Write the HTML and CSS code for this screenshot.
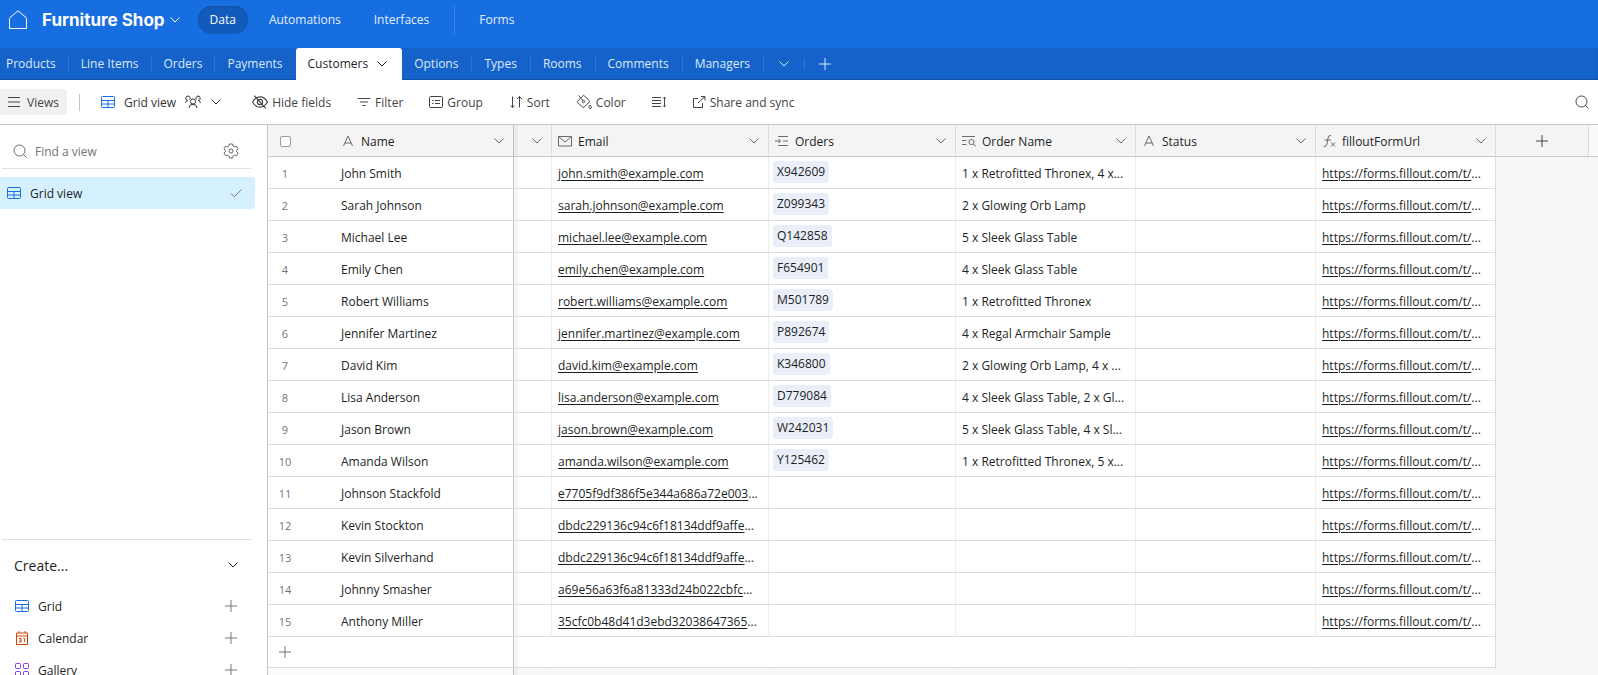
FILE: index.html
```
<!DOCTYPE html>
<html lang="en">
<head>
    <meta charset="UTF-8">
    <meta name="viewport" content="width=device-width, initial-scale=1.0">
    <title>Furniture Shop: Customers</title>
    <link rel="stylesheet" href="styles.css">
</head>
<body>
    <!-- Icons -->
    <svg class="sprite" aria-hidden="true">
        <symbol id="chevron" viewBox="0 0 12 12"><path d="M1.5 3.5 6 8l4.500-4.500"/></symbol>
        <symbol id="plus" viewBox="0 0 12 12"><path d="M6 0v12M0 6h12"/></symbol>
        <symbol id="home" viewBox="0 0 20 20"><path d="M1.500 18.500V8.700Q1.500 8 2 7.500L10 .8 18 7.500q.5.500.5 1.200v9.800z"/></symbol>
        <symbol id="lines" viewBox="0 0 12 12"><path d="M0 1.500h12M0 6h12M0 10.500h12"/></symbol>
        <symbol id="grid" viewBox="0 0 14 14"><path d="M1.500 1.500h11q1 0 1 1v9q0 1-1 1h-11q-1 0-1-1v-9q0-1 1-1zM.5 5.500h13M.5 9h13M7 5.500v7"/></symbol>
        <symbol id="people" viewBox="0 0 16 14"><circle cx="8" cy="6.500" r="2.600"/><path d="M4 13q.5-3.800 4-3.800T12 13M4.800 4.500A2.200 2.200 0 1 0 2.800 5.500Q1 6 .5 8M11.200 4.500a2.200 2.200 0 1 1 2 1Q15 6 15.500 8"/></symbol>
        <symbol id="hidden" viewBox="0 0 14 14"><path d="M.5 7Q3 2.500 7 2.500T13.500 7Q11 11.500 7 11.500T.5 7zM2 1.500l10 11"/><circle cx="7" cy="7" r="2.300"/></symbol>
        <symbol id="filter" viewBox="0 0 14 14"><path d="M.5 3.500h13M3 7h8M5.500 10.500h3"/></symbol>
        <symbol id="group" viewBox="0 0 14 14"><rect x=".5" y="1.500" width="13" height="11" rx="1"/><path d="M3 5.500h1.500M6 5.500h5M3 8.500h1.500M6 8.500h5"/></symbol>
        <symbol id="sort" viewBox="0 0 14 14"><path d="M3.500 1.500v11M1.500 10.500l2 2 2-2M10.500 12.500v-11M8 4l2.500-2.500L13 4"/></symbol>
        <symbol id="paint" viewBox="0 0 16 16"><path d="M1.500 7.200 7 1.800q.7-.6 1.400 0l4.800 4.800q.7.700 0 1.400l-5.200 5.200q-.7.700-1.400 0L1.500 8.400q-.5-.6 0-1.200zM2.500 1.500 7 6.600M14.200 11q-1.500 2-1.300 2.800t1.200.9q1.200 0 1.300-1T14.200 11z"/><circle cx="7.500" cy="7.500" r="1.200"/></symbol>
        <symbol id="height" viewBox="0 0 14 14"><path d="M0 2.500h9M0 5.500h9M0 8.500h9M0 11.500h9M12.500 2v10M11 3.500 12.500 2 14 3.500M11 10.500l1.500 1.500 1.500-1.500"/></symbol>
        <symbol id="share" viewBox="0 0 14 14"><path d="M6 3.500H1.500v9h9V8M6 8l7-6.500M9 1.500h4v4"/></symbol>
        <symbol id="search" viewBox="0 0 14 14"><circle cx="6.500" cy="6.500" r="5.500"/><path d="m10.500 10.500 3 3"/></symbol>
        <symbol id="gear" viewBox="0 0 16 16"><path d="M6.500 1h3l.6 2 1.400.8 2-.5L15 5.900 13.600 7.400v1.200L15 10.100l-1.500 2.600-2-.5-1.400.8-.6 2h-3l-.6-2-1.400-.8-2 .5L1 10.100l1.400-1.500V7.400L1 5.900l1.500-2.600 2 .5L5.900 3z"/><circle cx="8" cy="8" r="2"/></symbol>
        <symbol id="check" viewBox="0 0 12 12"><path d="m1 6.500 3.300 3.300L11.500 2.500"/></symbol>
        <symbol id="calendar" viewBox="0 0 14 14"><path d="M1.500 2h11v11.500h-11zM1.500 5h11M4 0v2M10 0v2M4 7.500h2v3.500H4M4.500 9.200H6M8.500 7.500h1.200V11"/></symbol>
        <symbol id="gallery" viewBox="0 0 14 14"><rect x=".5" y=".5" width="5" height="5" rx="1"/><rect x="8.500" y=".5" width="5" height="5" rx="1"/><rect x=".5" y="8.500" width="5" height="5" rx="1"/><rect x="8.500" y="8.500" width="5" height="5" rx="1"/></symbol>
        <symbol id="text" viewBox="0 0 14 14"><path d="M2.500 12 7 2l4.500 10M4 9h6"/></symbol>
        <symbol id="mail" viewBox="0 0 14 14"><path d="M.5 2.500h13v9.500H.5zM1 3l6 5 6-5"/></symbol>
        <symbol id="link" viewBox="0 0 14 14"><path d="M3 2.500h10M8 7h5M3 11.500h10M0 7h5.500M3.500 5l2 2-2 2"/></symbol>
        <symbol id="lookup" viewBox="0 0 14 14"><path d="M0 2.500h13M0 6.500h4.500M0 10.500h4.500M11.500 10l2 2.500"/><circle cx="9.500" cy="8" r="2.600"/></symbol>
        <symbol id="formula" viewBox="0 0 14 14"><path d="M9 1.500Q6.500.8 6 4L5 10q-.6 3-3.500 2.500M2.500 6H9M9 8.500l4 4M13 8.500l-4 4"/></symbol>
    </svg>

    <header class="topbar">
        <a class="home" href="#" aria-label="Home"><svg class="icon icon-lg"><use href="#home"/></svg></a>
        <button class="base-name">Furniture Shop <svg class="icon icon-sm"><use href="#chevron"/></svg></button>
        <nav class="main-nav">
            <a class="active" href="#">Data</a>
            <a href="#">Automations</a>
            <a href="#">Interfaces</a>
            <a class="forms" href="#">Forms</a>
        </nav>
    </header>

    <nav class="tabs">
        <a href="#">Products</a>
        <a href="#">Line Items</a>
        <a href="#">Orders</a>
        <a class="before-current" href="#">Payments</a>
        <a class="current" href="#">Customers <svg class="icon icon-sm"><use href="#chevron"/></svg></a>
        <a href="#">Options</a>
        <a href="#">Types</a>
        <a href="#">Rooms</a>
        <a href="#">Comments</a>
        <a href="#">Managers</a>
        <button aria-label="All tables"><svg class="icon icon-sm"><use href="#chevron"/></svg></button>
        <button aria-label="Add table"><svg class="icon icon-sm"><use href="#plus"/></svg></button>
    </nav>

    <div class="toolbar">
        <button class="views"><svg class="icon icon-sm"><use href="#lines"/></svg>Views</button>
        <button class="view-name"><svg class="icon blue"><use href="#grid"/></svg>Grid view<svg class="icon icon-md"><use href="#people"/></svg><svg class="icon icon-sm"><use href="#chevron"/></svg></button>
        <div class="tools">
            <button><svg class="icon icon-md"><use href="#hidden"/></svg>Hide fields</button>
            <button><svg class="icon"><use href="#filter"/></svg>Filter</button>
            <button><svg class="icon"><use href="#group"/></svg>Group</button>
            <button><svg class="icon"><use href="#sort"/></svg>Sort</button>
            <button><svg class="icon icon-md"><use href="#paint"/></svg>Color</button>
            <button aria-label="Row height"><svg class="icon"><use href="#height"/></svg></button>
            <button><svg class="icon"><use href="#share"/></svg>Share and sync</button>
        </div>
        <button class="search" aria-label="Search"><svg class="icon"><use href="#search"/></svg></button>
    </div>

    <main class="workspace">
        <aside class="sidebar">
            <div class="find">
                <svg class="icon"><use href="#search"/></svg>
                <input type="text" placeholder="Find a view" aria-label="Find a view">
                <button aria-label="View settings"><svg class="icon icon-md"><use href="#gear"/></svg></button>
            </div>
            <a class="view-item" href="#"><svg class="icon blue"><use href="#grid"/></svg><span>Grid view</span><svg class="icon icon-sm grey"><use href="#check"/></svg></a>
            <div class="create">
                <button class="create-title"><span>Create...</span><svg class="icon icon-sm"><use href="#chevron"/></svg></button>
                <button><svg class="icon blue"><use href="#grid"/></svg><span>Grid</span><svg class="icon icon-sm grey"><use href="#plus"/></svg></button>
                <button><svg class="icon orange"><use href="#calendar"/></svg><span>Calendar</span><svg class="icon icon-sm grey"><use href="#plus"/></svg></button>
                <button><svg class="icon purple"><use href="#gallery"/></svg><span>Gallery</span><svg class="icon icon-sm grey"><use href="#plus"/></svg></button>
            </div>
        </aside>

        <div class="grid">
            <table>
                <colgroup>
                    <col class="col-num"><col class="col-name"><col class="col-slim"><col class="col-email"><col class="col-orders"><col class="col-field"><col class="col-field"><col class="col-field"><col class="col-add"><col>
                </colgroup>
                <thead>
                    <tr>
                        <th class="num"><input type="checkbox" aria-label="Select all rows"></th>
                        <th class="name"><div class="field"><svg class="icon"><use href="#text"/></svg><span>Name</span><svg class="icon icon-sm"><use href="#chevron"/></svg></div></th>
                        <th class="slim"><div class="field"><span></span><svg class="icon icon-sm"><use href="#chevron"/></svg></div></th>
                        <th><div class="field"><svg class="icon"><use href="#mail"/></svg><span>Email</span><svg class="icon icon-sm"><use href="#chevron"/></svg></div></th>
                        <th><div class="field"><svg class="icon"><use href="#link"/></svg><span>Orders</span><svg class="icon icon-sm"><use href="#chevron"/></svg></div></th>
                        <th><div class="field"><svg class="icon"><use href="#lookup"/></svg><span>Order Name</span><svg class="icon icon-sm"><use href="#chevron"/></svg></div></th>
                        <th><div class="field"><svg class="icon"><use href="#text"/></svg><span>Status</span><svg class="icon icon-sm"><use href="#chevron"/></svg></div></th>
                        <th><div class="field"><svg class="icon"><use href="#formula"/></svg><span>filloutFormUrl</span><svg class="icon icon-sm"><use href="#chevron"/></svg></div></th>
                        <th class="add-field"><button aria-label="Add field"><svg class="icon icon-sm"><use href="#plus"/></svg></button></th>
                        <th class="rest"></th>
                    </tr>
                </thead>
                <tbody>
                    <tr><td class="num">1</td><td class="name">John Smith</td><td class="slim"></td><td><a href="#">john.smith@example.com</a></td><td class="order"><span>X942609</span></td><td>1 x Retrofitted Thronex, 4 x...</td><td></td><td><a href="#">https://forms.fillout.com/t/</a>...</td></tr>
                    <tr><td class="num">2</td><td class="name">Sarah Johnson</td><td class="slim"></td><td><a href="#">sarah.johnson@example.com</a></td><td class="order"><span>Z099343</span></td><td>2 x Glowing Orb Lamp</td><td></td><td><a href="#">https://forms.fillout.com/t/</a>...</td></tr>
                    <tr><td class="num">3</td><td class="name">Michael Lee</td><td class="slim"></td><td><a href="#">michael.lee@example.com</a></td><td class="order"><span>Q142858</span></td><td>5 x Sleek Glass Table</td><td></td><td><a href="#">https://forms.fillout.com/t/</a>...</td></tr>
                    <tr><td class="num">4</td><td class="name">Emily Chen</td><td class="slim"></td><td><a href="#">emily.chen@example.com</a></td><td class="order"><span>F654901</span></td><td>4 x Sleek Glass Table</td><td></td><td><a href="#">https://forms.fillout.com/t/</a>...</td></tr>
                    <tr><td class="num">5</td><td class="name">Robert Williams</td><td class="slim"></td><td><a href="#">robert.williams@example.com</a></td><td class="order"><span>M501789</span></td><td>1 x Retrofitted Thronex</td><td></td><td><a href="#">https://forms.fillout.com/t/</a>...</td></tr>
                    <tr><td class="num">6</td><td class="name">Jennifer Martinez</td><td class="slim"></td><td><a href="#">jennifer.martinez@example.com</a></td><td class="order"><span>P892674</span></td><td>4 x Regal Armchair Sample</td><td></td><td><a href="#">https://forms.fillout.com/t/</a>...</td></tr>
                    <tr><td class="num">7</td><td class="name">David Kim</td><td class="slim"></td><td><a href="#">david.kim@example.com</a></td><td class="order"><span>K346800</span></td><td>2 x Glowing Orb Lamp, 4 x ...</td><td></td><td><a href="#">https://forms.fillout.com/t/</a>...</td></tr>
                    <tr><td class="num">8</td><td class="name">Lisa Anderson</td><td class="slim"></td><td><a href="#">lisa.anderson@example.com</a></td><td class="order"><span>D779084</span></td><td>4 x Sleek Glass Table, 2 x Gl...</td><td></td><td><a href="#">https://forms.fillout.com/t/</a>...</td></tr>
                    <tr><td class="num">9</td><td class="name">Jason Brown</td><td class="slim"></td><td><a href="#">jason.brown@example.com</a></td><td class="order"><span>W242031</span></td><td>5 x Sleek Glass Table, 4 x Sl...</td><td></td><td><a href="#">https://forms.fillout.com/t/</a>...</td></tr>
                    <tr><td class="num">10</td><td class="name">Amanda Wilson</td><td class="slim"></td><td><a href="#">amanda.wilson@example.com</a></td><td class="order"><span>Y125462</span></td><td>1 x Retrofitted Thronex, 5 x...</td><td></td><td><a href="#">https://forms.fillout.com/t/</a>...</td></tr>
                    <tr><td class="num">11</td><td class="name">Johnson Stackfold</td><td class="slim"></td><td><a href="#">e7705f9df386f5e344a686a72e003</a>...</td><td></td><td></td><td></td><td><a href="#">https://forms.fillout.com/t/</a>...</td></tr>
                    <tr><td class="num">12</td><td class="name">Kevin Stockton</td><td class="slim"></td><td><a href="#">dbdc229136c94c6f18134ddf9affe</a>...</td><td></td><td></td><td></td><td><a href="#">https://forms.fillout.com/t/</a>...</td></tr>
                    <tr><td class="num">13</td><td class="name">Kevin Silverhand</td><td class="slim"></td><td><a href="#">dbdc229136c94c6f18134ddf9affe</a>...</td><td></td><td></td><td></td><td><a href="#">https://forms.fillout.com/t/</a>...</td></tr>
                    <tr><td class="num">14</td><td class="name">Johnny Smasher</td><td class="slim"></td><td><a href="#">a69e56a63f6a81333d24b022cbfc</a>...</td><td></td><td></td><td></td><td><a href="#">https://forms.fillout.com/t/</a>...</td></tr>
                    <tr><td class="num">15</td><td class="name">Anthony Miller</td><td class="slim"></td><td><a href="#">35cfc0b48d41d3ebd32038647365</a>...</td><td></td><td></td><td></td><td><a href="#">https://forms.fillout.com/t/</a>...</td></tr>
                    <tr class="add-row"><td class="num"><button aria-label="Add record"><svg class="icon icon-sm"><use href="#plus"/></svg></button></td><td class="name"></td><td class="slim"></td><td></td><td></td><td></td><td></td><td></td></tr>
                </tbody>
            </table>
            <div class="below"></div>
        </div>
    </main>
</body>
</html>
```
FILE: styles.css
```
* {
    box-sizing: border-box;
}
body {
    margin: 0;
    height: 100vh;
    display: flex;
    flex-direction: column;
    overflow: hidden;
    font-family: "Open Sans", sans-serif;
    font-size: 12px;
    color: #1d1f25;
    background: #fff;
}
a {
    color: inherit;
    text-decoration: none;
}
button {
    display: flex;
    align-items: center;
    padding: 0;
    border: 0;
    background: none;
    font: inherit;
    color: inherit;
    cursor: pointer;
}

/* Icons */
.sprite {
    display: none;
}
.icon {
    flex: none;
    width: 14px;
    height: 14px;
    fill: none;
    stroke: currentColor;
}
.icon-sm {
    width: 12px;
    height: 12px;
}
.icon-md {
    width: 16px;
    height: 16px;
}
.icon-lg {
    width: 20px;
    height: 20px;
}
.blue {
    color: #176ee1;
}
.orange {
    color: #d54401;
}
.purple {
    color: #7c39ed;
}
.grey {
    color: #777;
}

/* Top bar */
.topbar {
    flex: none;
    display: flex;
    align-items: center;
    height: 48px;
    padding: 0 8px 8px;
    background: #176ee1;
    color: #fff;
}
.home {
    display: flex;
    margin-right: 14px;
}
.base-name {
    gap: 4px;
    font-family: Inter, sans-serif;
    font-size: 17px;
    font-weight: 700;
}
.main-nav {
    display: flex;
    align-items: center;
    gap: 9px;
    margin-left: 17px;
    line-height: 28px;
    color: #e3edfb;
}
.main-nav a {
    padding: 0 12px;
    border-radius: 14px;
}
.main-nav .active {
    background: #135bbb;
    box-shadow: inset 0 1px 2px #1150a5;
    color: #fff;
}
.main-nav .forms {
    margin-left: 4px;
    border-left: 1px solid #3c85e6;
    border-radius: 0;
    padding-left: 24px;
}

/* Table tabs */
.tabs {
    flex: none;
    display: flex;
    align-items: center;
    height: 32px;
    background: #1462ca;
    color: #dfe9f8;
    box-shadow: inset 0 -1px 1px #0f4fa5;
}
.tabs a,
.tabs button {
    padding: 0 12px;
    border-right: 1px solid #3674cf;
    line-height: 14px;
    white-space: nowrap;
}
.tabs a:first-child {
    padding-left: 6px;
}
.tabs .before-current,
.tabs button:last-child {
    border-right-color: transparent;
}
.tabs .current ~ a {
    padding-right: 13px;
}
.tabs button {
    padding: 0 14px;
}
.tabs .current {
    display: flex;
    align-items: center;
    gap: 8px;
    height: 32px;
    padding-right: 14px;
    border: 0;
    border-radius: 3px 3px 0 0;
    background: #fff;
    color: #1d1f25;
}

/* Toolbar */
.toolbar {
    flex: none;
    display: flex;
    align-items: center;
    height: 45px;
    border-bottom: 1px solid #c6c6c6;
    color: #444;
}
.views {
    gap: 7px;
    height: 26px;
    padding: 0 8px;
    border-radius: 0 3px 3px 0;
    background: #f1f1f1;
}
.view-name {
    gap: 9px;
    margin-left: 12px;
    padding-left: 21px;
    border-left: 1px solid #c4c4c4;
    color: #333;
}
.tools {
    display: flex;
    gap: 26px;
    margin-left: 30px;
}
.tools button {
    gap: 4px;
}
.search {
    margin-left: auto;
    margin-right: 9px;
}

/* Sidebar */
.workspace {
    flex: 1;
    display: flex;
    min-height: 0;
}
.sidebar {
    flex: none;
    display: flex;
    flex-direction: column;
    width: 268px;
    border-right: 1px solid #c6c6c6;
}
.find {
    display: flex;
    align-items: center;
    gap: 8px;
    height: 44px;
    margin: 0 16px 8px 2px;
    padding: 9px 12px 0 11px;
    border-bottom: 1px solid #e0e0e0;
    color: #666;
}
.find input {
    flex: 1;
    min-width: 0;
    padding: 0;
    border: 0;
    outline: 0;
    font: inherit;
}
.find input::placeholder {
    color: #757575;
}
.view-item {
    display: flex;
    align-items: center;
    gap: 9px;
    height: 32px;
    margin-right: 12px;
    padding: 0 13px 0 7px;
    border-radius: 0 3px 3px 0;
    background: #d5f1ff;
}
.view-item span,
.create span {
    flex: 1;
    text-align: left;
}
/* Last entries run past the bottom of the window */
.create {
    margin: auto 16px -11px 2px;
    border-top: 1px solid #e0e0e0;
}
.create button {
    gap: 9px;
    width: 100%;
    height: 32px;
    padding: 0 14px 0 13px;
}
.create .create-title {
    height: 50px;
    padding: 0 12px;
    font-size: 14px;
}

/* Grid */
.grid {
    flex: 1;
    display: flex;
    flex-direction: column;
    min-width: 0;
    overflow: hidden;
    background: #f7f7f7;
}
table {
    width: 100%;
    table-layout: fixed;
    border-collapse: separate;
    border-spacing: 0;
}
.col-num {
    width: 66px;
}
.col-name {
    width: 180px;
}
.col-slim {
    width: 38px;
}
.col-email {
    width: 217px;
}
.col-orders {
    width: 187px;
}
.col-field {
    width: 180px;
}
.col-add {
    width: 93px;
}
th,
td {
    height: 32px;
    padding: 2px 6px 0;
    text-align: left;
    white-space: nowrap;
    overflow: hidden;
}
th {
    padding-top: 1px;
    border-right: 1px solid #dcdcdc;
    border-bottom: 1px solid #c9c9c9;
    background: #f4f4f4;
    font-weight: 400;
}
td {
    border-right: 1px solid #efefef;
    border-bottom: 1px solid #dcdfe3;
    background: #fff;
}
td a {
    text-decoration: underline;
    text-underline-offset: 2px;
}
td:last-child {
    border-right-color: #dcdcdc;
}
th.num,
td.num {
    padding-left: 0;
    padding-right: 32px;
    border-right: 0;
    text-align: center;
}
td.num {
    font-size: 11px;
    color: #757575;
}
th.name,
td.name {
    padding-left: 7px;
    border-right-color: #c3c3c3;
}
/* Shadow of the frozen column */
.slim {
    box-shadow: inset 4px 0 #00000009;
}
.field {
    display: flex;
    align-items: center;
    gap: 6px;
    padding-right: 2px;
    color: #6b6b6b;
}
.field span {
    flex: 1;
    color: #1d1f25;
}
.num button,
.add-field button {
    margin: auto;
}
.add-field button {
    color: #444;
}
.rest {
    border-right: 0;
    background: #fafafa;
}
th input {
    display: block;
    appearance: none;
    width: 11px;
    height: 11px;
    margin: auto;
    border: 1px solid #999;
    border-radius: 2px;
    background: #fff;
}
td.order {
    padding: 0 4px 1px;
}
.order span {
    display: inline-block;
    padding: 0 4px;
    border-radius: 3px;
    background: #eaeef9;
    line-height: 22px;
}
.add-row td {
    height: 31px;
    padding-top: 0;
    border-right-color: transparent;
    border-bottom-color: #dcdcdc;
}
.add-row td.name {
    border-right-color: #c3c3c3;
}
.add-row td:last-child {
    border-right-color: #dcdcdc;
}
.below {
    flex: 1;
    width: 246px;
    border-right: 1px solid #c3c3c3;
    background: #fbfbfb;
    box-shadow: 4px 0 #00000009;
}
```
